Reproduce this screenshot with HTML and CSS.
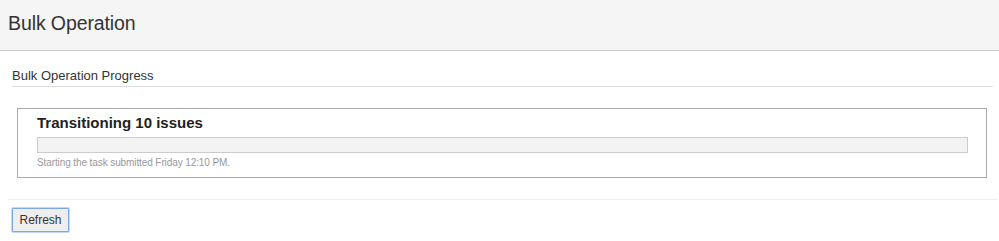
FILE: index.html
```html
<!DOCTYPE html>
<html>
<head>
<meta charset="utf-8">
<link rel="stylesheet" href="styles.css">
</head>
<body>
<header class="page-header">
  <h1 class="page-title">Bulk Operation</h1>
</header>
<main class="content">
  <section class="progress-section">
    <h2 class="section-title">Bulk Operation Progress</h2>
    <div class="task-box">
      <h3 class="task-title">Transitioning 10 issues</h3>
      <div class="progress-bar"><div class="progress-fill" style="width:0%"></div></div>
      <p class="task-status">Starting the task submitted Friday 12:10 PM.</p>
    </div>
  </section>
  <div class="actions">
    <button class="btn" type="button">Refresh</button>
  </div>
</main>
</body>
</html>
```
FILE: styles.css
```css
html, body {
  margin: 0;
  padding: 0;
  background: #fff;
  font-family: "Liberation Sans", Arial, sans-serif;
  color: #333;
}
.page-header {
  height: 51px;
  background: #f5f5f5;
  border-bottom: 1px solid #cfcfcf;
  box-sizing: border-box;
  display: flex;
  align-items: center;
  padding-left: 8px;
  padding-bottom: 4px;
}
.page-title {
  margin: 0;
  font-size: 19.5px;
  font-weight: normal;
  color: #333;
  letter-spacing: -0.1px;
}
.content {
  margin: 0 2px 0 8px;
}
.progress-section {
  padding: 16px 4px 0 4px;
}
.section-title {
  margin: 0;
  font-size: 13px;
  font-weight: normal;
  color: #333;
  line-height: 18px;
  padding-bottom: 1px;
  border-bottom: 1px solid #ddd;
}
.task-box {
  margin: 21px 6px 21px 5px;
  border: 1px solid #aaa;
  padding: 5px 18px 7px 19px;
}
.task-title {
  margin: 0;
  font-size: 15px;
  font-weight: bold;
  color: #222;
  line-height: 18px;
}
.progress-bar {
  margin-top: 5px;
  height: 16px;
  box-sizing: border-box;
  border: 1px solid #ccc;
  background: #f3f3f3;
}
.progress-fill {
  height: 100%;
  background: #3b73af;
}
.task-status {
  margin: 3px 0 0 0;
  font-size: 10px;
  color: #999;
  line-height: 14px;
  letter-spacing: -0.1px;
}
.actions {
  border-top: 1px solid #eee;
  padding: 8px 4px;
}
.btn {
  font-family: "Liberation Sans", Arial, sans-serif;
  font-size: 12px;
  color: #333;
  background: #eee;
  border: 1px solid #7fa7e0;
  border-radius: 1px;
  box-shadow: 0 0 0 1px #c5d8f3;
  height: 24px;
  width: 57px;
  padding: 0;
  cursor: pointer;
}
```
